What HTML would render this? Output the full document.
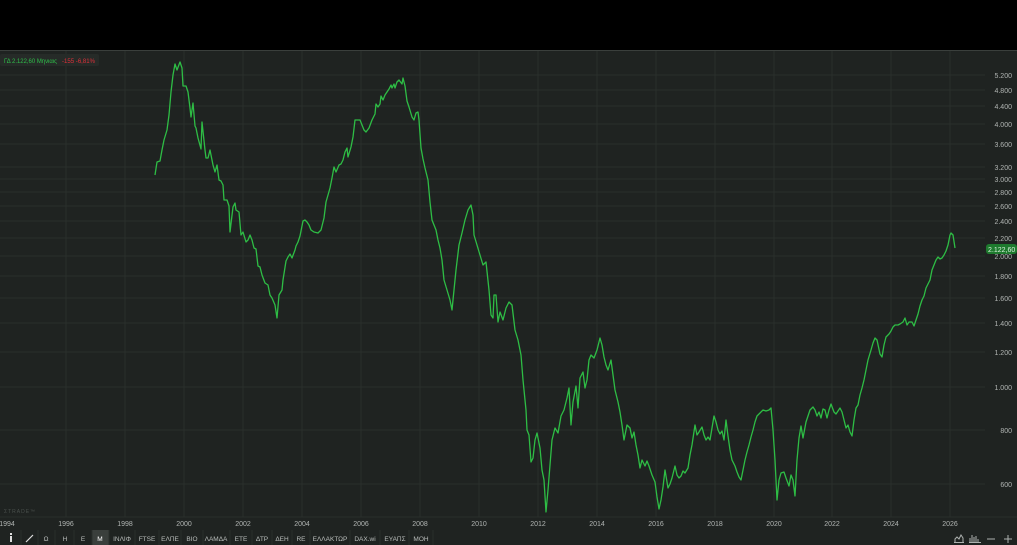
<!DOCTYPE html><html><head><meta charset="utf-8"><style>
body{margin:0;width:1017px;height:545px;background:#000;overflow:hidden;font-family:"Liberation Sans","DejaVu Sans",sans-serif}
#c{position:absolute;left:0;top:50px;width:1017px;height:495px;background:#1f2321}
svg{position:absolute;left:0;top:0}
</style></head><body>
<div id="c"></div>
<svg width="1017" height="545" font-family="Liberation Sans, sans-serif">
<rect x="0" y="50" width="1017" height="1" fill="#3a3f3c"/>
<g stroke="#2a2f2c" stroke-width="1">
<line x1="66" y1="51" x2="66" y2="517"/><line x1="125" y1="51" x2="125" y2="517"/><line x1="184" y1="51" x2="184" y2="517"/><line x1="243" y1="51" x2="243" y2="517"/><line x1="302" y1="51" x2="302" y2="517"/><line x1="361" y1="51" x2="361" y2="517"/><line x1="420" y1="51" x2="420" y2="517"/><line x1="479" y1="51" x2="479" y2="517"/><line x1="538" y1="51" x2="538" y2="517"/><line x1="597" y1="51" x2="597" y2="517"/><line x1="656" y1="51" x2="656" y2="517"/><line x1="715" y1="51" x2="715" y2="517"/><line x1="774" y1="51" x2="774" y2="517"/><line x1="832" y1="51" x2="832" y2="517"/><line x1="891" y1="51" x2="891" y2="517"/><line x1="950" y1="51" x2="950" y2="517"/>
<line x1="0" y1="75" x2="985" y2="75"/><line x1="0" y1="90" x2="985" y2="90"/><line x1="0" y1="106" x2="985" y2="106"/><line x1="0" y1="124" x2="985" y2="124"/><line x1="0" y1="144" x2="985" y2="144"/><line x1="0" y1="167" x2="985" y2="167"/><line x1="0" y1="179" x2="985" y2="179"/><line x1="0" y1="192" x2="985" y2="192"/><line x1="0" y1="206" x2="985" y2="206"/><line x1="0" y1="221" x2="985" y2="221"/><line x1="0" y1="238" x2="985" y2="238"/><line x1="0" y1="256" x2="985" y2="256"/><line x1="0" y1="276" x2="985" y2="276"/><line x1="0" y1="298" x2="985" y2="298"/><line x1="0" y1="323" x2="985" y2="323"/><line x1="0" y1="352" x2="985" y2="352"/><line x1="0" y1="387" x2="985" y2="387"/><line x1="0" y1="430" x2="985" y2="430"/><line x1="0" y1="484" x2="985" y2="484"/><line x1="0" y1="517" x2="1017" y2="517"/>
</g>
<g font-size="7" fill="#b0b4b2" text-anchor="end">
<text x="1012" y="78">5.200</text><text x="1012" y="93">4.800</text><text x="1012" y="109">4.400</text><text x="1012" y="127">4.000</text><text x="1012" y="147">3.600</text><text x="1012" y="170">3.200</text><text x="1012" y="182">3.000</text><text x="1012" y="195">2.800</text><text x="1012" y="209">2.600</text><text x="1012" y="224">2.400</text><text x="1012" y="241">2.200</text><text x="1012" y="259">2.000</text><text x="1012" y="279">1.800</text><text x="1012" y="301">1.600</text><text x="1012" y="326">1.400</text><text x="1012" y="355">1.200</text><text x="1012" y="390">1.000</text><text x="1012" y="433">800</text><text x="1012" y="487">600</text>
</g>
<g font-size="7" fill="#b0b4b2" text-anchor="middle">
<text x="7" y="526">1994</text><text x="66" y="526">1996</text><text x="125" y="526">1998</text><text x="184" y="526">2000</text><text x="243" y="526">2002</text><text x="302" y="526">2004</text><text x="361" y="526">2006</text><text x="420" y="526">2008</text><text x="479" y="526">2010</text><text x="538" y="526">2012</text><text x="597" y="526">2014</text><text x="656" y="526">2016</text><text x="715" y="526">2018</text><text x="774" y="526">2020</text><text x="832" y="526">2022</text><text x="891" y="526">2024</text><text x="950" y="526">2026</text>
</g>
<text x="4" y="513" font-size="5" fill="#4a504d" letter-spacing="1">ΣTRADE™</text>
<rect x="0" y="54" width="99" height="12" rx="2" fill="#262b28"/>
<text x="4" y="63" font-size="6.5" fill="#2fbf4a" textLength="53" lengthAdjust="spacingAndGlyphs">ΓΔ 2.122,60 Μηνιαις</text>
<text x="62" y="63" font-size="6.5" fill="#e0303a" textLength="33" lengthAdjust="spacingAndGlyphs">-155 -6,81%</text>
<rect x="986" y="244" width="31" height="10" rx="3" fill="#1e7a2e"/>
<text x="988" y="252" font-size="7" fill="#d8f0dc">2.122,60</text>
<polyline fill="none" stroke="#2ebd45" stroke-width="1.3" stroke-linejoin="round" points="155,175 157,162 160,161 162,150 164,140 167,130 169,115 171,92 173,75 175,64 177,70 180,62 182,68 183,86 186,86 188,92 190,108 191,117 193,103 195,126 196,128 198,138 201,149 202,122 205,150 206,158 208,158 210,150 213,165 215,172 217,165 219,180 221,181 223,185 224,200 227,200 229,206 230,232 233,207 235,203 236,210 239,212 241,235 243,232 246,242 248,240 250,235 252,240 254,248 256,249 258,266 260,267 262,275 265,283 268,285 270,295 272,298 275,305 277,318 279,295 282,290 283,280 286,261 288,257 290,254 292,258 295,250 296,246 298,242 300,236 303,221 305,220 307,222 309,225 311,230 314,232 318,233 321,230 324,218 326,202 328,195 330,188 332,178 334,167 336,172 339,165 341,164 343,160 345,152 347,148 348,157 351,147 353,137 355,120 357,120 358,120 360,120 362,125 364,130 366,132 369,128 372,120 375,114 376,104 378,107 380,104 381,96 383,100 385,95 387,92 389,89 391,85 392,88 394,84 395,88 397,82 399,80 402,84 403,78 405,86 407,101 409,107 412,117 414,120 416,113 418,112 419,120 421,148 423,159 425,168 428,180 430,202 432,220 434,225 436,230 438,240 440,248 442,260 444,280 447,290 450,300 452,310 454,290 456,270 459,245 462,233 465,220 468,210 471,205 473,215 474,235 477,245 480,255 483,265 486,262 489,290 491,315 493,318 494,295 496,295 498,322 500,312 503,320 506,308 509,302 512,305 515,330 518,340 521,355 523,380 526,410 527,430 529,435 531,462 533,458 535,440 537,433 540,448 542,470 544,480 546,512 548,490 550,465 552,440 555,428 558,433 561,416 564,410 567,398 569,388 571,425 573,402 576,386 578,408 580,378 583,372 585,388 587,380 589,360 591,355 594,358 597,350 600,338 602,345 604,357 606,365 608,370 611,360 613,375 615,390 618,402 620,412 622,425 624,440 627,425 630,428 632,438 634,432 636,445 638,455 640,468 642,460 645,466 647,461 649,466 652,475 655,482 657,497 659,509 661,500 663,487 665,470 668,488 670,484 672,478 675,466 677,475 679,478 681,476 683,471 685,473 688,468 690,455 692,445 695,425 697,435 699,432 702,427 704,435 706,440 708,437 710,440 712,428 714,416 716,422 718,430 720,434 722,431 724,440 726,420 728,436 730,450 732,460 735,466 737,472 739,477 741,480 743,470 745,460 747,452 749,445 751,437 753,430 755,422 757,416 760,413 763,410 766,411 769,410 771,408 773,430 775,460 777,500 779,480 781,473 784,472 786,478 789,486 791,475 793,480 795,496 797,460 799,438 801,426 803,438 806,422 808,416 810,410 813,407 815,410 817,416 819,412 821,418 823,409 825,410 827,418 829,410 831,404 834,412 836,414 838,411 840,408 842,412 844,420 846,428 848,425 850,432 852,436 854,420 856,408 858,405 860,395 862,388 864,380 866,370 868,360 871,350 873,343 875,338 877,340 880,354 882,357 884,345 886,337 889,334 891,331 893,327 895,325 898,325 900,324 903,322 905,318 907,325 909,322 912,322 914,326 916,320 918,314 920,306 922,300 924,296 926,288 928,284 930,280 932,270 934,265 936,260 938,257 940,259 942,258 944,255 946,251 948,245 950,235 951,233 953,235 955,248"/>
<rect x="92" y="530" width="17" height="15" fill="#3a3f3c"/>
<g stroke="#2a2f2c" stroke-width="1">
<line x1="21" y1="530" x2="21" y2="545"/><line x1="38" y1="530" x2="38" y2="545"/><line x1="55" y1="530" x2="55" y2="545"/><line x1="74" y1="530" x2="74" y2="545"/><line x1="92" y1="530" x2="92" y2="545"/><line x1="109" y1="530" x2="109" y2="545"/><line x1="135" y1="530" x2="135" y2="545"/><line x1="159" y1="530" x2="159" y2="545"/><line x1="181" y1="530" x2="181" y2="545"/><line x1="203" y1="530" x2="203" y2="545"/><line x1="230" y1="530" x2="230" y2="545"/><line x1="252" y1="530" x2="252" y2="545"/><line x1="272" y1="530" x2="272" y2="545"/><line x1="292" y1="530" x2="292" y2="545"/><line x1="310" y1="530" x2="310" y2="545"/><line x1="350" y1="530" x2="350" y2="545"/><line x1="380" y1="530" x2="380" y2="545"/><line x1="409" y1="530" x2="409" y2="545"/><line x1="433" y1="530" x2="433" y2="545"/>
</g>
<rect x="10" y="533" width="2" height="2" fill="#ddd"/><rect x="10" y="536" width="2" height="6" fill="#ddd"/>
<line x1="26" y1="542" x2="33" y2="535" stroke="#ddd" stroke-width="1.2"/>
<g font-size="6.5" fill="#b9bdbb" text-anchor="middle">
<text x="46" y="541">Ω</text><text x="65" y="541">Η</text><text x="83" y="541">Ε</text><text x="100" y="541" fill="#fff">Μ</text><text x="122" y="541">ΙΝΛΙΦ</text><text x="147" y="541">FTSE</text><text x="170" y="541">ΕΛΠΕ</text><text x="192" y="541">ΒΙΟ</text><text x="216" y="541">ΛΑΜΔΑ</text><text x="241" y="541">ΕΤΕ</text><text x="262" y="541">ΔΤΡ</text><text x="282" y="541">ΔΕΗ</text><text x="301" y="541">RE</text><text x="330" y="541">ΕΛΛΑΚΤΩΡ</text><text x="365" y="541">DAX.wi</text><text x="395" y="541">ΕΥΑΠΣ</text><text x="421" y="541">ΜΟΗ</text>
</g>
<g fill="none" stroke="#aeb2b0" stroke-width="1">
<path d="M955 542v-3l2-2 2 2 2-4 2 3v4"/><line x1="954" y1="542.5" x2="964" y2="542.5"/>
<path d="M970 542v-4M972 542v-7M974 542v-5M976 542v-6M978 542v-3"/><line x1="969" y1="542.5" x2="981" y2="542.5"/>
<line x1="987" y1="539" x2="995" y2="539"/>
<line x1="1004" y1="539" x2="1012" y2="539"/><line x1="1008" y1="535" x2="1008" y2="543"/>
</g>
</svg>
</body></html>
